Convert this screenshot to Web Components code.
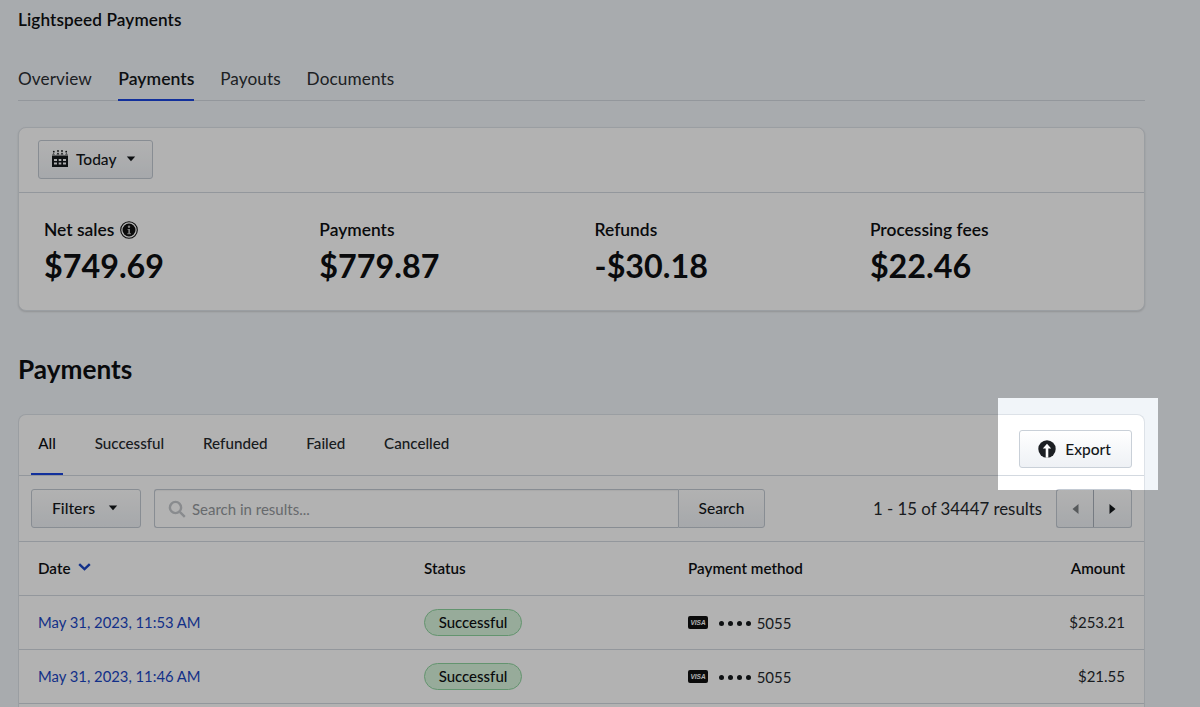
<!doctype html>
<html lang="en"><head><meta charset="utf-8"><title>Lightspeed Payments</title>
<style>
html,body{margin:0;height:707px;overflow:hidden;background:#f1f5f9}
body{font-family:Lato,"Liberation Sans",sans-serif;color:#14171a}
</style></head>
<body>
<ls-page>
  <ls-title slot="title">Lightspeed Payments</ls-title>
  <ls-nav slot="nav">
    <ls-nav-item>Overview</ls-nav-item>
    <ls-nav-item active>Payments</ls-nav-item>
    <ls-nav-item>Payouts</ls-nav-item>
    <ls-nav-item>Documents</ls-nav-item>
  </ls-nav>
  <ls-summary slot="summary">
    <ls-button slot="tool" icon="calendar" caret>Today</ls-button>
    <ls-stat label="Net sales" info>$749.69</ls-stat>
    <ls-stat label="Payments">$779.87</ls-stat>
    <ls-stat label="Refunds">-$30.18</ls-stat>
    <ls-stat label="Processing fees">$22.46</ls-stat>
  </ls-summary>
  <ls-heading slot="heading">Payments</ls-heading>
  <ls-table slot="table">
    <ls-row date="May 31, 2023, 11:53 AM" amount="$253.21"></ls-row>
    <ls-row date="May 31, 2023, 11:46 AM" amount="$21.55"></ls-row>
  </ls-table>
</ls-page>
<ls-spotlight></ls-spotlight>
<script>
const icons={
 calendar:'<svg width="18" height="18" viewBox="0 0 18 18" fill="currentColor"><path d="M1 5.5h16V17H1zM3 9v2h3V9zm4.700 0v2h2.600V9zM12 9v2h3V9zm-9 3.500v2h3v-2zm4.700 0v2h2.600v-2zm4.300 0v2h3v-2z" fill-rule="evenodd"/><path d="M1 4.400 2.600 3.200 4 4.400zM5.400 4.400 7 2.400l1.500 2zM9.500 4.400 11 2.400l1.500 2zM14 4.400l1.400-1.200L17 4.400z"/><circle cx="2.800" cy="1.700" r=".9"/><circle cx="7" cy="1" r=".9"/><circle cx="11" cy="1" r=".9"/><circle cx="15.200" cy="1.700" r=".9"/></svg>',
 upload:'<svg width="18" height="18" viewBox="0 0 18 18"><circle cx="9" cy="9" r="8.700" fill="#1c1f23"/><path d="M9 3.800 13.200 8.600H10.300V17.700H7.700V8.600H4.800z" fill="#fff"/></svg>',
 caret:'<svg width="10" height="6" viewBox="0 0 10 6" fill="currentColor"><path d="M.8.500h8.400L5 5.300z"/></svg>',
 search:'<svg width="18" height="18" viewBox="0 0 18 18" fill="none" stroke="#c4c8cc" stroke-width="2.400"><circle cx="7.500" cy="7.500" r="5.600"/><path d="m11.800 11.800 5 5"/></svg>',
 left:'<svg width="7" height="10" viewBox="0 0 7 10" fill="currentColor"><path d="M6.500 0v10L.5 5z"/></svg>',
 right:'<svg width="7" height="10" viewBox="0 0 7 10" fill="currentColor"><path d="M.5 0v10l6-5z"/></svg>',
 sort:'<svg width="13" height="8" viewBox="0 0 13 8" fill="none" stroke="#1a46c4" stroke-width="2.400"><path d="m1.200 1.200 5.300 5 5.300-5"/></svg>',
 info:'<svg width="18" height="18" viewBox="0 0 18 18"><circle cx="9" cy="9" r="8.300" fill="none" stroke="#111" stroke-width="1.100"/><circle cx="9" cy="9" r="6.500" fill="#111"/><circle cx="9" cy="5.800" r="1.200" fill="#b2b2b2"/><path d="M7.600 7.900h2.400v4.300h1v1.100H7.300v-1.100h1V9H7.600z" fill="#b2b2b2"/></svg>'
};
function def(name,css,html){
  customElements.define(name,class extends HTMLElement{
    constructor(){super();this.attachShadow({mode:'open'});}
    connectedCallback(){
      const h=typeof html==='function'?html(this):html;
      this.shadowRoot.innerHTML='<style>'+css+'</style>'+h;
    }
  });
}
const btnBg='linear-gradient(#fff,#eef1f5)';
def('ls-page',`:host{display:block;box-sizing:border-box;width:1127px;margin-left:18px}
 .t{height:47px}.n{height:80px}.h{height:103px}`,
 `<div class="t"><slot name="title"></slot></div><div class="n"><slot name="nav"></slot></div>
  <slot name="summary"></slot><div class="h"><slot name="heading"></slot></div><slot name="table"></slot>`);
def('ls-title',`:host{display:block;padding-top:10px;font:600 17.200px/20px Lato,sans-serif;color:#0d0f12;letter-spacing:.1px}`,'<slot></slot>');
def('ls-nav',`:host{display:block;border-bottom:1px solid #d3d9e0;height:54px;box-sizing:border-box}
 div{display:flex;gap:25.800px}`,'<div><slot></slot></div>');
def('ls-nav-item',`:host{display:block;height:54px;box-sizing:border-box;padding-top:22px;font:400 17.200px/20px Lato,sans-serif;color:#2b2f33;letter-spacing:.1px}
 :host(:first-child){margin-right:.5px}
 :host([active]){font-weight:600;color:#14171a;border-bottom:2px solid #1a46e0;font-size:17.600px;letter-spacing:0}`,'<slot></slot>');
def('ls-summary',`:host{display:block;height:184px;box-sizing:border-box;background:#fff;border:1px solid #dde2e8;border-radius:8px;box-shadow:0 1px 2px rgba(0,0,0,.14)}
 .tool{height:65px;box-sizing:border-box;padding:12px 0 0 19px;border-bottom:1px solid #d3d9e0}
 .stats{display:grid;grid-template-columns:repeat(4,275.300px);padding:27px 0 0 25px}`,
 '<div class="tool"><slot name="tool"></slot></div><div class="stats"><slot></slot></div>');
def('ls-button',`:host{display:inline-flex;box-sizing:border-box;height:39px;width:115px;align-items:center;padding:0 0 2px 12px;gap:7px;background:${btnBg};border:1px solid #c3cad3;border-radius:3px;font:500 15.500px/20px Lato,sans-serif;color:#14171a}
 svg{display:block}.c{margin-left:3px}`,
 el=>`${el.hasAttribute('icon')?icons[el.getAttribute('icon')]:''}<slot></slot>${el.hasAttribute('caret')?'<span class="c">'+icons.caret+'</span>':''}`);
def('ls-stat',`:host{display:block;color:#0d0f12}
 .l{display:flex;align-items:center;gap:6px;font:600 17.400px/20px Lato,sans-serif;height:20px}
 .v{font:700 32.300px/38px Lato,sans-serif;padding-top:7px}svg{display:block}`,
 el=>`<div class="l">${el.getAttribute('label')}${el.hasAttribute('info')?icons.info:''}</div><div class="v"><slot></slot></div>`);
def('ls-heading',`:host{display:block;padding-top:43px;font:700 26.200px/30px Lato,sans-serif;color:#0d0f12}`,'<slot></slot>');
def('ls-table',`:host{display:block;height:293px;box-sizing:border-box;background:#fff;border:1px solid #dde2e8;border-bottom:0;border-radius:8px 8px 0 0}
 .bar{height:61px;box-sizing:border-box;border-bottom:1px solid #d3d9e0;display:flex;justify-content:space-between;padding:0 12px}
 .tabs{display:flex;gap:24.200px}
 .tools{height:66px;box-sizing:border-box;border-bottom:1px solid #d3d9e0;display:flex;align-items:flex-start;padding:13px 12px 0;}`,
 `<div class="bar"><div class="tabs"><ls-tab active>All</ls-tab><ls-tab>Successful</ls-tab><ls-tab>Refunded</ls-tab><ls-tab>Failed</ls-tab><ls-tab>Cancelled</ls-tab></div><ls-export>Export</ls-export></div>
  <div class="tools"><ls-filter>Filters</ls-filter><ls-search></ls-search><ls-pager></ls-pager></div>
  <ls-header></ls-header><slot></slot>`);
def('ls-tab',`:host{display:block;box-sizing:border-box;height:60px;padding:18px 7.300px 0;font:500 15.200px/20px Lato,sans-serif;color:#25292d}
 :host([active]){color:#0d0f12;border-bottom:2px solid #1a46e0}`,'<slot></slot>');
def('ls-export',`:host{display:flex;box-sizing:border-box;margin-top:15px;width:113px;height:38px;padding:0 2px 1px 0;gap:9px;align-items:center;justify-content:center;background:${btnBg};border:1px solid #c9d0d8;border-radius:3px;font:500 15.500px/20px Lato,sans-serif;color:#14171a}svg{display:block}`,
 icons.upload+'<slot></slot>');
def('ls-filter',`:host{display:flex;box-sizing:border-box;width:110px;height:39px;padding:0 2px 2px 0;align-items:center;justify-content:center;gap:13px;background:${btnBg};border:1px solid #c3cad3;border-radius:3px;font:500 15.800px/20px Lato,sans-serif;color:#14171a}svg{display:block}`,
 '<slot></slot>'+icons.caret);
def('ls-search',`:host{display:flex;margin-left:13px;height:39px;width:611px}
 .i{flex:1;box-sizing:border-box;display:flex;align-items:center;gap:6px;padding-left:13px;background:#fff;border:1px solid #c3cad3;border-right:0;border-radius:3px 0 0 3px;font:400 15px/20px Lato,sans-serif;color:#94989c;box-shadow:inset 0 1px 1px rgba(0,0,0,.05)}
 .b{box-sizing:border-box;width:87px;padding-bottom:2px;display:flex;align-items:center;justify-content:center;background:${btnBg};border:1px solid #c3cad3;border-radius:0 3px 3px 0;font:500 15.500px/20px Lato,sans-serif;color:#14171a}svg{display:block}`,
 `<div class="i">${icons.search}<span>Search in results...</span></div><div class="b">Search</div>`);
def('ls-pager',`:host{display:flex;flex:1;justify-content:flex-end;align-items:center;height:39px}
 .r{font:400 16.800px/20px Lato,sans-serif;color:#25292d;margin-right:14px}
 .p{box-sizing:border-box;height:39px;display:flex;align-items:center;justify-content:center;background:${btnBg};border:1px solid #c3cad3}
 .a{width:37px;border-radius:3px 0 0 3px;border-right:0;color:#7d8185}.z{width:39px;border-radius:0 3px 3px 0;color:#14171a;border-left-color:#a9b1ba}svg{display:block}`,
 `<span class="r">1 - 15 of 34447 results</span><div class="p a">${icons.left}</div><div class="p z">${icons.right}</div>`);
const cols=`display:grid;grid-template-columns:386px 264px 1fr auto;padding:0 19px;align-items:center;box-sizing:border-box;height:54px;border-bottom:1px solid #d3d9e0;`;
def('ls-header',`:host{${cols}padding-bottom:2px;font:600 15.200px/20px Lato,sans-serif;color:#0d0f12}
 .d{display:flex;align-items:center;gap:8px}svg{display:block;margin-top:-2px}`,
 `<div class="d">Date${icons.sort}</div><div>Status</div><div>Payment method</div><div>Amount</div>`);
def('ls-row',`:host{${cols}font:400 15px/20px Lato,sans-serif;color:#25292d}
 a{color:#1a46c4;text-decoration:none;font-size:14.800px;margin-bottom:2px}
 .amt{margin-bottom:2px}
 .pill{display:inline-block;box-sizing:border-box;height:27px;width:98px;text-align:center;border:1px solid #8fd49f;border-radius:14px;background:#d8f5dd;font:500 15px/25px Lato,sans-serif;color:#0d0f12}
 .m{display:flex;align-items:center;font-size:15px;padding-top:1px}
 .v{width:20px;height:13px;border-radius:2px;background:#111;color:#fff;font:italic 700 6.500px/13px "Liberation Sans",sans-serif;text-align:center;margin-right:11px;margin-top:-2px}
 .dots{display:flex;gap:3.900px;margin-right:6px}.dots i{width:5px;height:5px;border-radius:50%;background:#14171a}`,
 el=>`<a href="#">${el.getAttribute('date')}</a><div><span class="pill">Successful</span></div><div class="m"><span class="v">VISA</span><span class="dots"><i></i><i></i><i></i><i></i></span>5055</div><div class="amt">${el.getAttribute('amount')}</div>`);
def('ls-spotlight',`:host{position:fixed;left:998px;top:398px;width:160px;height:92px;box-shadow:0 0 0 2000px rgba(0,0,0,.3);pointer-events:none}`,'');
</script>
</body></html>
